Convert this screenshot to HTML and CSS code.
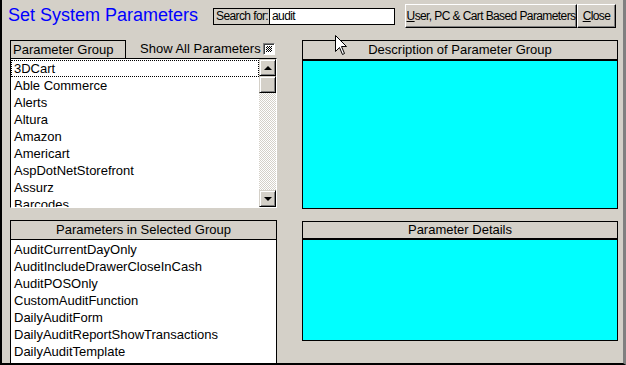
FILE: index.html
```html
<!DOCTYPE html>
<html lang="en">
<head>
  <meta charset="UTF-8">
  <title>Set System Parameters</title>
  <link rel="stylesheet" href="styles.css">
</head>
<body>

<div class="window">
  <div class="topbar">
    <h1 class="title">Set System Parameters</h1>
    <div class="search">
      <span class="search-label">Search for:</span>
      <span class="search-input">audit</span>
    </div>
    <div class="buttons">
      <button class="btn btn-wide"><u>U</u>ser, PC &amp; Cart Based Parameters</button>
      <button class="btn btn-close"><u>C</u>lose</button>
    </div>
  </div>

  <div class="panes">
    <div class="col-left">
      <div class="group-row">
        <div class="group-head">Parameter Group</div>
        <div class="show-all">Show All Parameters<span class="check"></span></div>
      </div>
      <div class="listbox">
        <div class="items">
          <div class="item focus">3DCart</div>
          <div class="item">Able Commerce</div>
          <div class="item">Alerts</div>
          <div class="item">Altura</div>
          <div class="item">Amazon</div>
          <div class="item">Americart</div>
          <div class="item">AspDotNetStorefront</div>
          <div class="item">Assurz</div>
          <div class="item">Barcodes</div>
        </div>
        <div class="scroll">
          <div class="sbtn"><span class="arrow-up"></span></div>
          <div class="sbtn"></div>
          <div class="track"></div>
          <div class="sbtn"><span class="arrow-down"></span></div>
        </div>
      </div>

      <div class="params-head">Parameters in Selected Group</div>
      <div class="params-list">
        <div class="item">AuditCurrentDayOnly</div>
        <div class="item">AuditIncludeDrawerCloseInCash</div>
        <div class="item">AuditPOSOnly</div>
        <div class="item">CustomAuditFunction</div>
        <div class="item">DailyAuditForm</div>
        <div class="item">DailyAuditReportShowTransactions</div>
        <div class="item">DailyAuditTemplate</div>
      </div>
    </div>

    <div class="col-right">
      <div class="panel-head head-desc">Description of Parameter Group</div>
      <div class="cyan cyan-desc"></div>
      <div class="panel-head head-details">Parameter Details</div>
      <div class="cyan cyan-details"></div>
    </div>
  </div>

  <svg class="cursor" width="13" height="21" viewBox="0 0 13 21">
    <path d="M0.5 0.5 L0.5 16.5 L4.5 12.5 L7.5 19.5 L9.5 18.5 L6.5 11.5 L11.5 11.5 Z" fill="#fff" stroke="#000" stroke-width="1"/>
  </svg>
</div>

</body>
</html>
```

FILE: styles.css
```css
* {
  box-sizing: border-box;
  margin: 0;
  padding: 0;
}

body {
  background: #d4d0c8;
  font-family: "Liberation Sans", Arial, sans-serif;
  font-size: 13px;
  color: #000;
}

.window {
  position: relative;
  width: 626px;
  height: 365px;
  background: #d4d0c8;
  border-left: 2px solid #000;
  border-bottom: 2px solid #000;
  border-right: 3px solid #808080;
  overflow: hidden;
}

/* top bar */
.topbar {
  display: flex;
  align-items: flex-start;
  height: 40px;
  padding-left: 6px;
}

.title {
  width: 205px;
  margin-top: 5px;
  font-size: 18px;
  line-height: 21px;
  font-weight: normal;
  color: #0000ff;
  white-space: nowrap;
}

.search {
  display: flex;
  width: 182px;
  height: 17px;
  margin-top: 8px;
  border: 1px solid #000;
  font-size: 12px;
  letter-spacing: -0.6px;
  line-height: 15px;
}

.search-label {
  width: 56px;
  padding-left: 2px;
  border-right: 1px solid #000;
  white-space: nowrap;
}

.search-input {
  flex: 1;
  background: #fff;
  padding-left: 2px;
}

.buttons {
  display: flex;
  margin-left: 10px;
  margin-top: 4px;
}

.btn {
  height: 24px;
  padding: 0;
  background: #d4d0c8;
  border: 1px solid;
  border-color: #fff #000 #000 #fff;
  box-shadow: inset -1px -1px #808080;
  font-family: "Liberation Sans", Arial, sans-serif;
  font-size: 12px;
  letter-spacing: -0.6px;
  color: #000;
  white-space: nowrap;
}

.btn-wide {
  width: 172px;
}

.btn-close {
  width: 39px;
}

/* panes */
.panes {
  display: flex;
  gap: 25px;
  height: 323px;
  padding-left: 8px;
}

.col-left {
  width: 267px;
  display: flex;
  flex-direction: column;
}

.group-row {
  display: flex;
  height: 18px;
}

.group-head {
  width: 116px;
  height: 18px;
  border: 1px solid #000;
  border-bottom: none;
  padding-left: 2px;
  line-height: 17px;
}

.show-all {
  display: flex;
  align-items: flex-start;
  margin-left: 14px;
  line-height: 17px;
  white-space: nowrap;
}

.check {
  width: 12px;
  height: 12px;
  margin-top: 3px;
  margin-left: 2px;
  border: 1px solid;
  border-color: #808080 #fff #fff #808080;
  background: repeating-conic-gradient(#000 0 25%, #fff 0 50%) 0 0 / 2px 2px;
  box-shadow: inset 1px 1px #404040, inset 0 0 0 2px #fff;
}

.listbox {
  display: flex;
  height: 150px;
  background: #fff;
  border: 1px solid;
  border-color: #000 #fff #fff #000;
}

.items {
  flex: 1;
  padding-top: 1px;
  overflow: hidden;
}

.item {
  height: 17px;
  line-height: 17px;
  padding-left: 3px;
  white-space: nowrap;
}

.item.focus {
  outline: 1px dotted #000;
  outline-offset: -1px;
}

.scroll {
  width: 17px;
  display: flex;
  flex-direction: column;
}

.sbtn {
  height: 17px;
  display: flex;
  align-items: center;
  justify-content: center;
  background: #d4d0c8;
  border: 1px solid;
  border-color: #d4d0c8 #000 #000 #d4d0c8;
  box-shadow: inset 1px 1px #fff, inset -1px -1px #808080;
}

.track {
  flex: 1;
  background: repeating-conic-gradient(#fff 0 25%, #d4d0c8 0 50%) 0 0 / 2px 2px;
}

.arrow-up {
  border-left: 4px solid transparent;
  border-right: 4px solid transparent;
  border-bottom: 4px solid #000;
}

.arrow-down {
  border-left: 4px solid transparent;
  border-right: 4px solid transparent;
  border-top: 4px solid #000;
}

.params-head {
  height: 20px;
  margin-top: 12px;
  border: 1px solid #000;
  text-align: center;
  line-height: 18px;
}

.params-list {
  flex: 1;
  padding-top: 1px;
  background: #fff;
  border-left: 1px solid #000;
  border-right: 1px solid #000;
}

.col-right {
  width: 316px;
  display: flex;
  flex-direction: column;
}

.panel-head {
  border: 1px solid #000;
  border-bottom-width: 2px;
  text-align: center;
}

.head-desc {
  height: 21px;
  line-height: 18px;
}

.head-details {
  height: 19px;
  margin-top: 12px;
  line-height: 16px;
}

.cyan {
  background: #00ffff;
  border: 1px solid #000;
  border-top: none;
}

.cyan-desc {
  height: 148px;
}

.cyan-details {
  height: 101px;
}

.cursor {
  position: absolute;
  left: 333px;
  top: 35px;
}
```
